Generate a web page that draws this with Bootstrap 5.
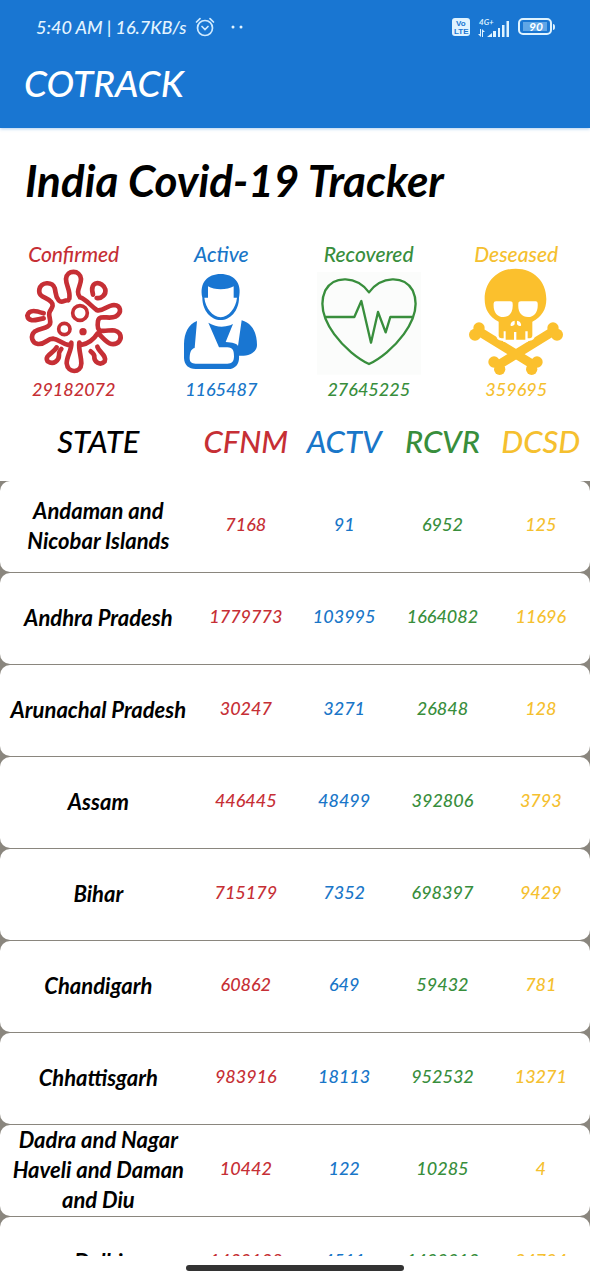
<!DOCTYPE html>
<html lang="en">
<head>
<meta charset="utf-8">
<meta name="viewport" content="width=device-width, initial-scale=1">
<title>COTRACK</title>
<link href="https://cdn.jsdelivr.net/npm/bootstrap@5.3.0/dist/css/bootstrap.min.css" rel="stylesheet">
<style>
  body { font-family: "Lato", sans-serif; font-style: italic; color: #000; background: #fff; }
  .app-bar { background: #1976d2; color: #fff; box-shadow: 0 1px 3px rgba(25, 118, 210, .35); z-index: 1; }
  .status-row { height: 54px; padding: 0 34px 0 36px; font-size: 18px; font-weight: 500; color: #e3f4ff; }
  .brand-row { height: 74px; padding: 0 24px 16px; }
  .brand-name { font-size: 37px; line-height: 44px; font-weight: 500; }
  .page-title { font-size: 44px; line-height: 56px; font-weight: 700; padding: 24px 25px 0; }
  .c-red { color: #c62f35; }
  .c-blue { color: #1976c8; }
  .c-green { color: #388e3c; }
  .c-gold { color: #f5c02f; }
  .totals { padding-top: 32px; font-size: 21px; line-height: 28px; font-weight: 500; }
  .totals .count { font-size: 18px; line-height: 26px; }
  .totals svg { width: 104px; height: 108px; display: block; }
  .scroll-area { overflow: hidden; min-height: 0; }
  .state-table { width: 100%; table-layout: fixed; border-collapse: separate; border-spacing: 0 1px; background: #8a867e; text-align: center; }
  .state-table th, .state-table td { background: #fff; height: 91px; vertical-align: middle; }
  .state-table thead th { height: 77px; padding: 0 0 2px; font-size: 31px; line-height: 40px; font-weight: 500; box-shadow: 0 1px #fff, 0 -1px #fff; }
  .state-table tbody th { font-size: 22px; line-height: 30px; font-weight: 700; padding: 0 4px 1px; border-radius: 10px 0 0 10px; }
  .state-table tbody td { font-size: 18px; font-weight: 500; padding: 0 0 5px; }
  .state-table tbody td:last-child { border-radius: 0 10px 10px 0; }
  .col-state { width: 33.33%; }
  .gesture-bar { height: 24px; background: #fff; }
  .gesture-pill { width: 37%; height: 6px; background: #333; }
</style>
</head>
<body>
<div class="d-flex flex-column vh-100 overflow-hidden">
  <header class="app-bar flex-shrink-0">
    <div class="status-row d-flex align-items-center">
      <span>5:40 AM | 16.7KB/s</span>
      <svg class="ms-2" width="20" height="20" viewBox="0 0 20 20" fill="none" stroke="#cfeaff" stroke-width="1.7" stroke-linecap="round" aria-hidden="true"><circle cx="10" cy="11" r="7.5"/><path d="M7 9.5l3 3 3-3M1.500 5L5 1.600M18.500 5L15 1.600"/></svg>
      <svg class="ms-3" width="12" height="4" viewBox="0 0 12 4" fill="#e3f4ff" aria-hidden="true"><circle cx="2" cy="2" r="1.500"/><circle cx="10" cy="2" r="1.500"/></svg>
      <div class="ms-auto d-flex align-items-center gap-2">
        <svg width="18" height="18" viewBox="0 0 18 18" aria-hidden="true"><rect width="18" height="18" rx="3" fill="#dff3ff"/><text x="4" y="8" font-size="8" font-weight="700" font-style="normal" font-family="Liberation Sans" fill="#1976d2">Vo</text><text x="2" y="16" font-size="8" font-weight="700" font-style="normal" font-family="Liberation Sans" fill="#1976d2">LTE</text></svg>
        <svg width="32" height="24" viewBox="0 -3 32 24" fill="#dff3ff" aria-hidden="true"><text x="1" y="7" font-size="8" font-weight="700">4G+</text><path d="M2 11v5H0l3 3v-8zM5 19v-5h2l-3-3v8zM9 19l5-4v4zM15 13h3v6h-3zM20 10h2v9h-2zM24 7h2.500v12H24zM28.500 3h2.500v16h-2.500z"/></svg>
        <svg width="38" height="18" viewBox="0 0 38 18" aria-hidden="true"><rect x="1" y="1" width="32" height="15" rx="4" fill="none" stroke="#dff3ff" stroke-width="2"/><rect x="5" y="4" width="24" height="9" fill="#5fa6e6"/><path d="M35 6q2 0 2 3t-2 3z" fill="#dff3ff"/><text x="11" y="13" font-size="12" font-weight="700" fill="#fff">90</text></svg>
      </div>
    </div>
    <div class="brand-row d-flex align-items-center"><h1 class="brand-name m-0">COTRACK</h1></div>
  </header>

  <main class="scroll-area flex-grow-1">
    <h2 class="page-title m-0">India Covid-19 Tracker</h2>

    <section class="totals row g-0 text-center" aria-label="Totals">
      <div class="col-3 d-flex flex-column align-items-center c-red">
        <div>Confirmed</div>
        <svg viewBox="65 114 312 324" fill="none" stroke="currentColor" stroke-width="14" stroke-linecap="round" stroke-linejoin="round" aria-hidden="true">
          <path d="M207 206L204 211C190 209 186 222 175 211C164 198 167 187 163 174C155 154 123 155 117 178C113 203 139 200 152 215C164 228 151 236 147 248C144 260 153 271 149 282C141 298 121 292 104 304C88 318 95 339 113 342C136 344 139 326 158 326C175 327 184 342 208 346L213 338C215 359 199 378 199 400C202 431 242 430 243 400C243 379 234 359 237 338L242 345C263 342 280 329 292 310C306 319 316 338 333 342C354 345 367 327 358 311C345 293 324 305 300 302C292 299 291 286 293 273C298 252 324 269 345 260C367 248 361 226 341 225C319 226 306 247 289 240C270 226 257 208 239 202C224 185 242 168 242 147C240 119 199 118 197 147C197 168 211 181 207 206"/>
          <path d="M278 194C265 150 307 152 315 178C318 193 304 207 289 204M130 250C109 243 87 236 81 257C84 279 108 269 130 265M169 352C161 369 130 376 142 394C160 406 176 391 176 376C174 366 179 363 183 357M291 350C295 365 321 378 313 394C299 409 281 395 282 381C283 372 276 368 271 364"/>
          <circle cx="239" cy="249" r="22" stroke-width="11"/><circle cx="192" cy="297" r="17" stroke-width="11"/><circle cx="248" cy="305" r="11" fill="currentColor" stroke="none"/>
        </svg>
        <div class="count">29182072</div>
      </div>
      <div class="col-3 d-flex flex-column align-items-center c-blue">
        <div>Active</div>
        <svg viewBox="28 114 312 324" fill="#1976d2" aria-hidden="true">
          <path d="M128 203C118 158 144 132 183 132C222 132 248 158 238 203C238 243 211 270 183 270C155 270 128 243 128 203Z"/>
          <path d="M145 169C163 181 203 181 222 169V203H232C228 235 208 260 183 262C158 260 138 235 134 203H145Z" fill="#fff"/>
          <path d="M112 273C85 283 74 310 73 342V384C74 405 87 417 108 417H205C230 417 240 398 238 377C266 379 292 368 292 345C292 308 277 279 246 271L235 348C231 340 219 338 198 336L220 282L212 286C188 293 170 292 146 278L178 352H203C220 353 223 362 223 379C223 395 216 401 203 401H108C94 401 89 394 90 381C91 364 96 356 105 354Z"/>
        </svg>
        <div class="count">1165487</div>
      </div>
      <div class="col-3 d-flex flex-column align-items-center c-green">
        <div>Recovered</div>
        <svg viewBox="50 114 312 324" fill="none" stroke="currentColor" stroke-width="7" stroke-linejoin="round" aria-hidden="true">
          <rect x="50" y="126" width="312" height="308" fill="#fbfcfb" stroke="none"/>
          <path d="M206 187C168 137 101 136 75 181C36 267 141 372 206 402C271 372 376 267 337 181C311 136 244 137 206 187ZM74 261H162L183 213L212 338L233 246L256 307L270 261H338"/>
        </svg>
        <div class="count">27645225</div>
      </div>
      <div class="col-3 d-flex flex-column align-items-center c-gold">
        <div>Deseased</div>
        <svg viewBox="43 114 312 324" fill="#fbc02d" aria-hidden="true">
          <g stroke="#fbc02d" stroke-width="27" stroke-linecap="round"><path d="M88 304L250 404M310 304L148 404"/></g>
          <circle cx="88" cy="294" r="17"/><circle cx="76" cy="314" r="18"/><circle cx="310" cy="294" r="17"/><circle cx="322" cy="314" r="18"/><circle cx="133" cy="396" r="17"/><circle cx="150" cy="418" r="17"/><circle cx="262" cy="396" r="17"/><circle cx="246" cy="418" r="17"/>
          <path stroke="#fff" stroke-width="14" paint-order="stroke" d="M198 116C143 116 105 155 105 207C105 238 118 260 147 275V318Q148 325 156 325H162V304H168V329H193V306H200V329H227V304H234V325H240Q248 325 248 316V275C277 260 290 238 290 207C290 155 253 116 198 116Z"/>
          <g fill="#fff"><path d="M132 220Q132 214 139 214H181Q189 214 189 221C191 247 180 261 161 261C142 261 130 246 132 220ZM206 221Q206 214 214 214H258Q264 214 264 220C266 246 254 261 235 261C216 261 204 247 206 221ZM195 272C187 272 181 281 183 287Q190 290 195 283ZM202 272C210 272 216 281 214 287Q207 290 202 283Z"/></g>
        </svg>
        <div class="count">359695</div>
      </div>
    </section>

    <table class="state-table">
      <thead>
        <tr><th scope="col" class="col-state">STATE</th><th scope="col" class="c-red">CFNM</th><th scope="col" class="c-blue">ACTV</th><th scope="col" class="c-green">RCVR</th><th scope="col" class="c-gold">DCSD</th></tr>
      </thead>
      <tbody>
        <tr><th scope="row">Andaman and Nicobar Islands</th><td class="c-red">7168</td><td class="c-blue">91</td><td class="c-green">6952</td><td class="c-gold">125</td></tr>
        <tr><th scope="row">Andhra Pradesh</th><td class="c-red">1779773</td><td class="c-blue">103995</td><td class="c-green">1664082</td><td class="c-gold">11696</td></tr>
        <tr><th scope="row">Arunachal Pradesh</th><td class="c-red">30247</td><td class="c-blue">3271</td><td class="c-green">26848</td><td class="c-gold">128</td></tr>
        <tr><th scope="row">Assam</th><td class="c-red">446445</td><td class="c-blue">48499</td><td class="c-green">392806</td><td class="c-gold">3793</td></tr>
        <tr><th scope="row">Bihar</th><td class="c-red">715179</td><td class="c-blue">7352</td><td class="c-green">698397</td><td class="c-gold">9429</td></tr>
        <tr><th scope="row">Chandigarh</th><td class="c-red">60862</td><td class="c-blue">649</td><td class="c-green">59432</td><td class="c-gold">781</td></tr>
        <tr><th scope="row">Chhattisgarh</th><td class="c-red">983916</td><td class="c-blue">18113</td><td class="c-green">952532</td><td class="c-gold">13271</td></tr>
        <tr><th scope="row">Dadra and Nagar Haveli and Daman and Diu</th><td class="c-red">10442</td><td class="c-blue">122</td><td class="c-green">10285</td><td class="c-gold">4</td></tr>
        <tr><th scope="row">Delhi</th><td class="c-red">1430128</td><td class="c-blue">4511</td><td class="c-green">1400913</td><td class="c-gold">24704</td></tr>
      </tbody>
    </table>
  </main>

  <footer class="gesture-bar flex-shrink-0 d-flex align-items-center justify-content-center"><div class="gesture-pill rounded-pill"></div></footer>
</div>
<script src="https://cdn.jsdelivr.net/npm/bootstrap@5.3.0/dist/js/bootstrap.bundle.min.js"></script>
</body>
</html>
